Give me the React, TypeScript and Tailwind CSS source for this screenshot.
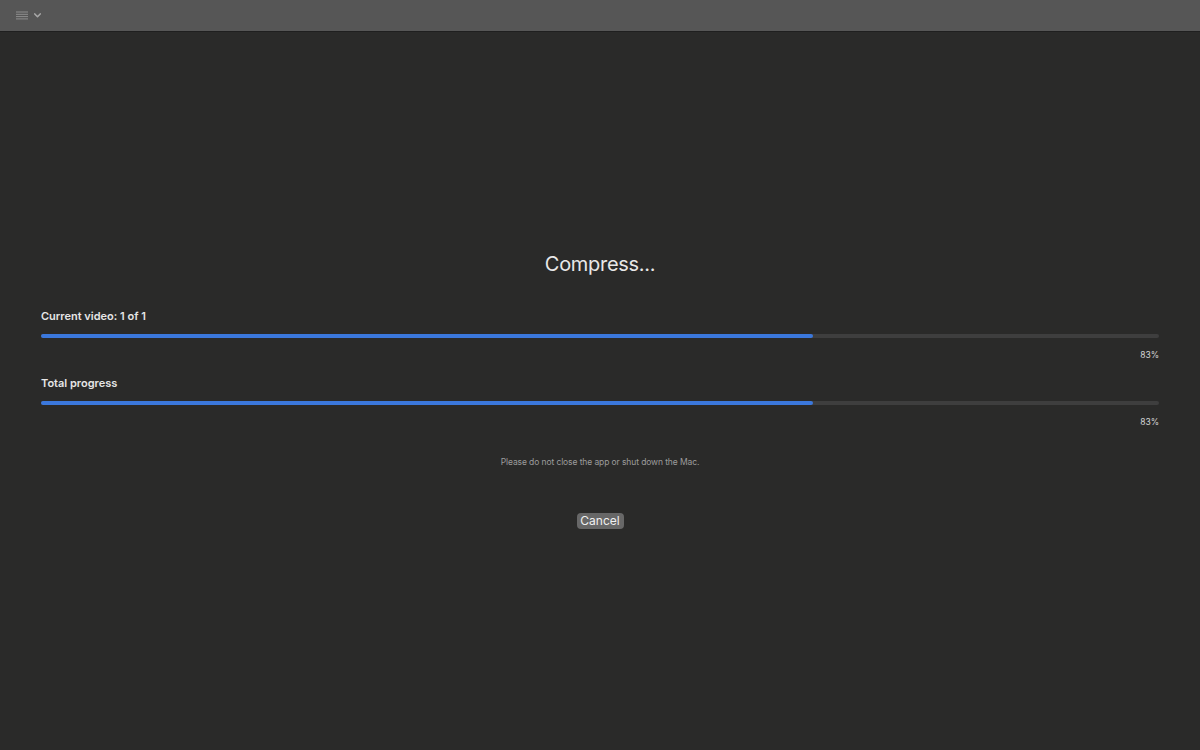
import React from 'react'

interface ProgressRowProps {
  label: string;
  percent: string;
  fill: number;
}

const ProgressRow: React.FC<ProgressRowProps> = ({ label, percent, fill }) => {
  return (
    <div className="flex flex-col">
      <div className="text-[11px] leading-[14px] font-semibold text-[#e6e6e6]">{label}</div>
      <div className="mt-[11px] h-[4px] w-full rounded-full bg-[#3e3e3e]">
        <div className="h-full rounded-full bg-[#3b78dc]" style={{ width: `${fill}%` }} />
      </div>
      <div className="mt-[11px] text-right text-[8.5px] leading-[12px] text-[#d4d4d4]">{percent}</div>
    </div>
  );
};

export default function App() {
  return (
    <div
      className="flex h-[750px] w-[1200px] flex-col bg-[#2a2a29]"
      style={{ fontFamily: 'Inter, "Liberation Sans", sans-serif' }}
    >
      {/* Toolbar */}
      <div className="flex h-[32px] shrink-0 items-center gap-[6px] border-b border-[#1f1f1f] bg-[#565656] pl-[16px]">
        <svg width="12" height="9" viewBox="0 0 12 9" className="text-[#8e8e8e]">
          <rect x="0" y="0.5" width="12" height="1" fill="currentColor" />
          <rect x="0" y="2.8" width="12" height="1" fill="currentColor" />
          <rect x="0" y="5.1" width="12" height="1" fill="currentColor" />
          <rect x="0" y="7.4" width="12" height="1" fill="currentColor" />
        </svg>
        <svg width="7" height="5" viewBox="0 0 7 5" className="text-[#a8a8a8]">
          <path d="M0.8 0.9 L3.5 3.8 L6.2 0.9" stroke="currentColor" strokeWidth="1.5" fill="none" strokeLinecap="round" strokeLinejoin="round" />
        </svg>
      </div>

      {/* Content */}
      <div className="flex flex-col px-[41px] pt-[218px]">
        <h1 className="text-center text-[20px] leading-[28px] font-normal tracking-[-0.3px] text-[#e8e8e8]">Compress...</h1>

        <div className="mt-[31px] flex flex-col gap-[15px]">
          <ProgressRow label="Current video: 1 of 1" percent="83%" fill={69.05} />
          <ProgressRow label="Total progress" percent="83%" fill={69.05} />
        </div>

        <p className="mt-[28px] text-center text-[8.5px] leading-[12px] tracking-[-0.1px] text-[#9c9c9c]">
          Please do not close the app or shut down the Mac.
        </p>

        <div className="mt-[45px] flex justify-center">
          <button className="flex h-[16px] w-[47px] items-center justify-center rounded-[4px] bg-[#676767] text-[12px] leading-[16px] text-[#f0f0f0]">
            Cancel
          </button>
        </div>
      </div>
    </div>
  );
}
